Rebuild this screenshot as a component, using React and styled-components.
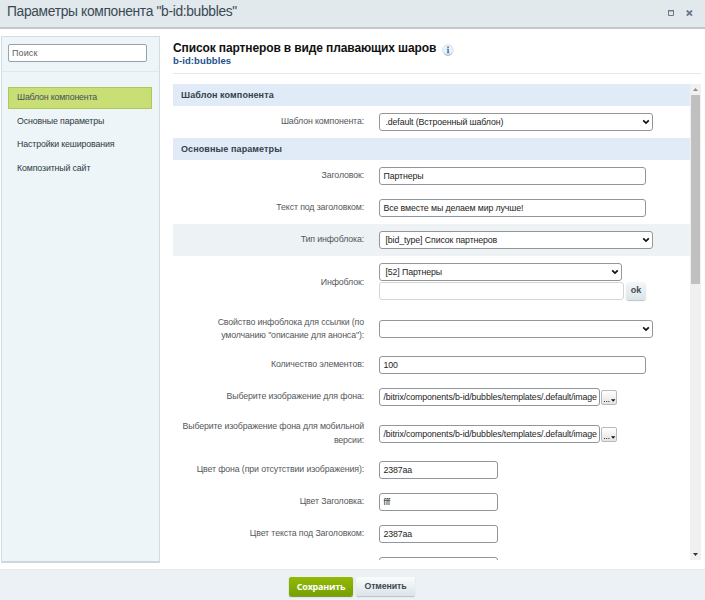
import React from 'react';
import styled, { createGlobalStyle } from 'styled-components';

const GlobalStyle = createGlobalStyle`
  * {
    box-sizing: border-box;
  }
  body {
    margin: 0;
    background: #fff;
    font-family: 'Liberation Sans', Arial, sans-serif;
  }
`;

const Dialog = styled.div`
  width: 705px;
  height: 600px;
  display: flex;
  flex-direction: column;
  overflow: hidden;
  background: #fff;
`;

const Header = styled.header`
  height: 29px;
  flex: none;
  display: flex;
  align-items: flex-start;
  justify-content: space-between;
  padding: 4px 12px 0 7px;
  background: #e1e9ec;
  border-bottom: 2px solid #c1c7cd;
`;

const DialogTitle = styled.div`
  font-size: 13.8px;
  line-height: 16px;
  letter-spacing: -0.33px;
  color: #3b4854;
  white-space: nowrap;
`;

const WindowButtons = styled.div`
  display: flex;
  align-items: center;
  gap: 11px;
  padding-top: 6px;
`;

const Body = styled.div`
  flex: 1;
  min-height: 0;
  display: flex;
`;

const Sidebar = styled.aside`
  width: 159px;
  height: 527px;
  margin: 7px 13px 0 1px;
  flex: none;
  background: #edf5f8;
  border: 1px solid #d3dce0;
  border-bottom: 2px solid #ced7db;
`;

const SearchArea = styled.div`
  height: 35px;
  padding: 7px 0 0 6px;
  border-bottom: 1px solid #dfe8eb;
`;

const Search = styled.div`
  width: 139px;
  height: 18px;
  padding-left: 3px;
  border: 1px solid #98a2ab;
  border-radius: 2px;
  background: #fff;
  font-size: 9px;
  line-height: 16px;
  letter-spacing: 0.1px;
  color: #606060;
`;

const Menu = styled.nav`
  display: flex;
  flex-direction: column;
  gap: 2px;
  padding: 15px 7px 0 6px;
`;

const MenuItem = styled.div`
  height: 21.7px;
  padding-left: 8px;
  border: 1px solid ${props => (props.$active ? '#acc95a' : 'transparent')};
  background: ${props => (props.$active ? '#c9de74' : 'transparent')};
  font-size: 8.8px;
  line-height: 19px;
  letter-spacing: ${props => (props.$active ? '-0.18px' : '-0.13px')};
  color: ${props => (props.$active ? '#46505a' : '#303a40')};
  white-space: nowrap;
`;

const Main = styled.main`
  width: 528px;
  display: flex;
  flex-direction: column;
`;

const MainHeading = styled.div`
  height: 45px;
  flex: none;
  padding-top: 12px;
  border-bottom: 1px solid #e2e7ea;
`;

const TitleLine = styled.div`
  display: flex;
  align-items: center;
  gap: 6px;
  height: 14px;
  font-size: 12px;
  font-weight: bold;
  letter-spacing: -0.12px;
  color: #111;
  white-space: nowrap;

  svg {
    margin-top: 3px;
  }
`;

const SubTitle = styled.div`
  font-size: 9.5px;
  line-height: 12px;
  font-weight: bold;
  letter-spacing: 0.1px;
  color: #1b4f8c;
`;

const ScrollPane = styled.div`
  display: flex;
  height: 476px;
  margin-top: 10px;
  overflow: hidden;
`;

const Form = styled.div`
  width: 517px;
  flex: none;
`;

const Section = styled.div`
  height: 22px;
  padding-left: 8px;
  background: #e0ebf7;
  font-size: 9px;
  line-height: 22px;
  font-weight: bold;
  letter-spacing: 0.1px;
  color: #33414c;
`;

const Row = styled.div`
  height: ${props => props.$height || 32}px;
  display: grid;
  grid-template-columns: 191px 1fr;
  column-gap: 15px;
  align-items: center;
  background: ${props => (props.$active ? '#edf2f4' : 'transparent')};
`;

const Label = styled.div`
  text-align: right;
  font-size: 8.8px;
  line-height: 13.3px;
  letter-spacing: -0.13px;
  color: #55585b;
  white-space: pre-line;
`;

const Controls = styled.div`
  display: flex;
  flex-wrap: wrap;
  align-items: center;
  gap: 1px 2px;
  padding-bottom: ${props => (props.$stacked ? 2 : 0)}px;
`;

const Field = styled.div`
  width: ${props => props.$width}px;
  height: 18px;
  flex: none;
  padding: 0 2px 0 3.5px;
  border: 1px solid ${props => (props.$faint ? '#d3d6d8' : '#8f979e')};
  border-radius: 3px;
  background: #fff;
  font-size: 8.8px;
  line-height: 16px;
  letter-spacing: -0.12px;
  color: #1d1d1d;
  white-space: nowrap;
  overflow: hidden;
`;

const SelectBox = styled(Field)`
  display: flex;
  align-items: center;
  justify-content: space-between;
  padding: 0 2px 0 5.5px;
  border-color: #969696;
`;

const OkButton = styled.div`
  width: 20px;
  height: 18px;
  border-radius: 3px;
  background: linear-gradient(#f3f7f8, #dae4e8);
  box-shadow: 0 1px 1px #b9c4c9;
  font-size: 9px;
  line-height: 17px;
  font-weight: bold;
  text-align: center;
  color: #3f4b54;
`;

const BrowseButton = styled.div`
  width: 16px;
  height: 15px;
  display: flex;
  align-items: flex-end;
  justify-content: center;
  padding-bottom: 1px;
  margin: 1px 0 0 -1px;
  border: 1px solid #b9b9b9;
  border-radius: 2px;
  background: linear-gradient(#fff, #e4e4e4);
`;

const Scrollbar = styled.div`
  width: 11px;
  height: 476px;
  display: flex;
  flex-direction: column;
  align-items: center;
  background: #f0f0f0;
`;

const ScrollArrow = styled.div`
  width: 11px;
  height: 11px;
  flex: none;
  display: flex;
  align-items: center;
  justify-content: center;
`;

const Thumb = styled.div`
  width: 9px;
  height: 189px;
  background: #c0c0c0;
`;

const Track = styled.div`
  flex: 1;
`;

const Footer = styled.footer`
  height: 31px;
  flex: none;
  display: flex;
  align-items: flex-start;
  gap: 3px;
  padding: 7px 0 0 289px;
  background: #ebf1f4;
  border-top: 1px solid #e3e9ec;
`;

const Button = styled.div`
  width: ${props => (props.$primary ? 64 : 59)}px;
  height: 19px;
  border-radius: 2px;
  background: ${props => (props.$primary
    ? 'linear-gradient(#93b906, #75a000)'
    : 'linear-gradient(#fafcfc, #dbe4e8)')};
  box-shadow: 0 1px 1px ${props => (props.$primary ? '#75922b' : '#b5c0c5')};
  font-size: ${props => (props.$primary ? 9 : 8.8)}px;
  line-height: 19px;
  font-weight: bold;
  letter-spacing: ${props => (props.$primary ? '-0.25px' : '-0.1px')};
  text-align: center;
  color: ${props => (props.$primary ? '#fff' : '#3f4b54')};
  font-family: ${props => (props.$primary ? "'Open Sans', sans-serif" : 'inherit')};
`;

const Chevron = () => (
  <svg width="8" height="6" viewBox="0 0 8 6">
    <path d="M1.2 1.3 L4 4.1 L6.8 1.3" fill="none" stroke="#111" strokeWidth="1.7" />
  </svg>
);

const Select = ({ width, children }) => (
  <SelectBox $width={width}>
    <span>{children}</span>
    <Chevron />
  </SelectBox>
);

const Browse = () => (
  <BrowseButton>
    <svg width="13" height="6" viewBox="0 0 13 6">
      <path d="M1 4h1v1H1zM3.2 4h1v1h-1zM5.4 4h1v1h-1z" fill="#333" />
      <path d="M8 2.2h4.4L10.2 4.8z" fill="#111" />
    </svg>
  </BrowseButton>
);

const InfoIcon = () => (
  <svg width="12" height="12" viewBox="0 0 12 12">
    <circle cx="6" cy="6" r="5.3" fill="#ebf1f6" stroke="#d3dbe2" strokeWidth="0.8" />
    <path d="M1.8 9.3a5.3 5.3 0 0 0 8.4 0" fill="none" stroke="#9facba" strokeWidth="0.8" />
    <path d="M5.3 2.5h1.5v1.4H5.3zM4.8 4.8h2v3.6h.7v.8H4.7v-.8h.7V5.6h-.6z" fill="#2c70c5" />
  </svg>
);

const path = '/bitrix/components/b-id/bubbles/templates/.default/image';

const App = () => {
  return (
    <Dialog>
      <GlobalStyle />
      <Header>
        <DialogTitle>Параметры компонента "b-id:bubbles"</DialogTitle>
        <WindowButtons>
          <svg width="7" height="7" viewBox="0 0 7 7">
            <path d="M.5 .5h5v5h-5z" fill="none" stroke="#66788a" />
            <path d="M0 .7h6" stroke="#66788a" strokeWidth="1.4" />
          </svg>
          <svg width="7" height="7" viewBox="0 0 7 7">
            <path d="M.8 .5l5.2 5.2M6 .5L.8 5.7" stroke="#66788a" strokeWidth="1.8" />
          </svg>
        </WindowButtons>
      </Header>
      <Body>
        <Sidebar>
          <SearchArea>
            <Search>Поиск</Search>
          </SearchArea>
          <Menu>
            <MenuItem $active>Шаблон компонента</MenuItem>
            <MenuItem>Основные параметры</MenuItem>
            <MenuItem>Настройки кеширования</MenuItem>
            <MenuItem>Композитный сайт</MenuItem>
          </Menu>
        </Sidebar>
        <Main>
          <MainHeading>
            <TitleLine>
              <span>Список партнеров в виде плавающих шаров</span>
              <InfoIcon />
            </TitleLine>
            <SubTitle>b-id:bubbles</SubTitle>
          </MainHeading>
          <ScrollPane>
            <Form>
              <Section>Шаблон компонента</Section>
              <Row>
                <Label>Шаблон компонента:</Label>
                <Controls><Select width={274}>.default (Встроенный шаблон)</Select></Controls>
              </Row>
              <Section>Основные параметры</Section>
              <Row>
                <Label>Заголовок:</Label>
                <Controls><Field $width={267}>Партнеры</Field></Controls>
              </Row>
              <Row>
                <Label>Текст под заголовком:</Label>
                <Controls><Field $width={267}>Все вместе мы делаем мир лучше!</Field></Controls>
              </Row>
              <Row $active>
                <Label>Тип инфоблока:</Label>
                <Controls><Select width={274}>[bid_type] Список партнеров</Select></Controls>
              </Row>
              <Row $height={53}>
                <Label>Инфоблок:</Label>
                <Controls $stacked>
                  <Select width={243}>[52] Партнеры</Select>
                  <Field $width={245} $faint />
                  <OkButton>ok</OkButton>
                </Controls>
              </Row>
              <Row $height={40}>
                <Label>{'Свойство инфоблока для ссылки (по\nумолчанию "описание для анонса"):'}</Label>
                <Controls><Select width={274} /></Controls>
              </Row>
              <Row>
                <Label>Количество элементов:</Label>
                <Controls><Field $width={267}>100</Field></Controls>
              </Row>
              <Row>
                <Label>Выберите изображение для фона:</Label>
                <Controls>
                  <Field $width={221}>{path}</Field>
                  <Browse />
                </Controls>
              </Row>
              <Row $height={41}>
                <Label>{'Выберите изображение фона для мобильной\nверсии:'}</Label>
                <Controls>
                  <Field $width={221}>{path}</Field>
                  <Browse />
                </Controls>
              </Row>
              <Row>
                <Label>Цвет фона (при отсутствии изображения):</Label>
                <Controls><Field $width={119}>2387aa</Field></Controls>
              </Row>
              <Row>
                <Label>Цвет Заголовка:</Label>
                <Controls><Field $width={119}>fff</Field></Controls>
              </Row>
              <Row>
                <Label>Цвет текста под Заголовком:</Label>
                <Controls><Field $width={119}>2387aa</Field></Controls>
              </Row>
              <Row>
                <Label />
                <Controls><Field $width={119} /></Controls>
              </Row>
            </Form>
            <Scrollbar>
              <ScrollArrow>
                <svg width="5" height="3" viewBox="0 0 5 3"><path d="M0 3h5L2.5 0z" fill="#8d8d8d" /></svg>
              </ScrollArrow>
              <Thumb />
              <Track />
              <ScrollArrow>
                <svg width="5" height="3" viewBox="0 0 5 3"><path d="M0 0h5L2.5 3z" fill="#333" /></svg>
              </ScrollArrow>
            </Scrollbar>
          </ScrollPane>
        </Main>
      </Body>
      <Footer>
        <Button $primary>Сохранить</Button>
        <Button>Отменить</Button>
      </Footer>
    </Dialog>
  );
};

export default App;
